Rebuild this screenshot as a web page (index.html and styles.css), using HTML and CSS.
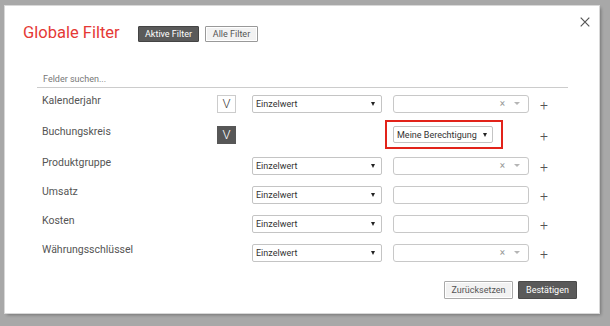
FILE: index.html
```html
<!DOCTYPE html>
<html lang="de">
<head>
    <meta charset="UTF-8">
    <meta name="viewport" content="width=device-width, initial-scale=1.0">
    <title>Globale Filter</title>
    <link rel="stylesheet" href="styles.css">
</head>
<body>
    <div class="dialog">
        <div class="dialog-header">
            <h1 class="title">Globale Filter</h1>
            <div class="tabs">
                <button class="tab tab-active">Aktive Filter</button>
                <button class="tab">Alle Filter</button>
            </div>
            <button class="close" aria-label="Schließen">
                <svg width="10" height="10" viewBox="0 0 10 10"><path d="M0.7 0.7 L9.3 9.3 M9.3 0.7 L0.7 9.3" stroke="#555" stroke-width="1.2" fill="none"/></svg>
            </button>
        </div>

        <div class="dialog-body">
            <input type="text" class="search" placeholder="Felder suchen...">

            <div class="filter-list">
                <div class="filter-row">
                    <span class="filter-label">Kalenderjahr</span>
                    <span class="toggle">V</span>
                    <div class="select"><span>Einzelwert</span><i class="caret"></i></div>
                    <div class="value"><span class="clear">×</span><i class="caret caret-light"></i></div>
                    <span class="add">+</span>
                </div>

                <div class="filter-row filter-row-tall">
                    <span class="filter-label">Buchungskreis</span>
                    <span class="toggle toggle-on">V</span>
                    <div class="highlight">
                        <div class="select select-compact"><span>Meine Berechtigung</span><i class="caret"></i></div>
                    </div>
                    <span class="add">+</span>
                </div>

                <div class="filter-row">
                    <span class="filter-label">Produktgruppe</span>
                    <span></span>
                    <div class="select"><span>Einzelwert</span><i class="caret"></i></div>
                    <div class="value"><span class="clear">×</span><i class="caret caret-light"></i></div>
                    <span class="add">+</span>
                </div>

                <div class="filter-row">
                    <span class="filter-label">Umsatz</span>
                    <span></span>
                    <div class="select"><span>Einzelwert</span><i class="caret"></i></div>
                    <div class="value"></div>
                    <span class="add">+</span>
                </div>

                <div class="filter-row">
                    <span class="filter-label">Kosten</span>
                    <span></span>
                    <div class="select"><span>Einzelwert</span><i class="caret"></i></div>
                    <div class="value"></div>
                    <span class="add">+</span>
                </div>

                <div class="filter-row">
                    <span class="filter-label">Währungsschlüssel</span>
                    <span></span>
                    <div class="select"><span>Einzelwert</span><i class="caret"></i></div>
                    <div class="value"><span class="clear">×</span><i class="caret caret-light"></i></div>
                    <span class="add">+</span>
                </div>
            </div>
        </div>

        <div class="dialog-footer">
            <button class="btn btn-light">Zurücksetzen</button>
            <button class="btn btn-dark">Bestätigen</button>
        </div>
    </div>
</body>
</html>
```

FILE: styles.css
```css
/* Page */
body {
    margin: 0;
    padding: 6px 11px 13px 5px;
    background: #a8a8a8;
    font-family: Roboto, 'Liberation Sans', sans-serif;
    color: #333;
}

button {
    font-family: inherit;
    cursor: pointer;
}

/* Dialog box */
.dialog {
    width: 594px;
    box-sizing: border-box;
    padding: 11px 9px 14px 0;
    background: #fff;
    box-shadow: 0 0 0 1px #d8d8d8, 2px 2px 3px rgba(0, 0, 0, 0.3);
}

/* Header */
.dialog-header {
    display: flex;
    align-items: flex-start;
    padding-left: 18px;
}

.title {
    margin: 6px 0 0;
    min-width: 115px;
    font-size: 16.5px;
    font-weight: 400;
    line-height: 20px;
    color: #e53935;
}

.tabs {
    display: flex;
    gap: 6px;
    margin-top: 9px;
}

.tab {
    height: 16px;
    padding: 0;
    width: 53px;
    font-size: 9px;
    color: #555;
    background: #f2f2f2;
    border: 1px solid #999;
    box-shadow: inset 0 0 0 1px #fff;
    border-radius: 1px;
}

.tab-active {
    width: 61px;
    background: #5a5a5a;
    border-color: #444;
    box-shadow: none;
    color: #fff;
}

.close {
    margin-left: auto;
    width: 10px;
    height: 10px;
    padding: 0;
    border: none;
    background: none;
    display: flex;
}

/* Body */
.dialog-body {
    padding: 0 22px 0 32px;
}

.search {
    display: block;
    width: 100%;
    height: 18px;
    box-sizing: border-box;
    margin-top: 27px;
    padding: 0 6px;
    border: none;
    border-bottom: 1px solid #ccc;
    font-family: inherit;
    font-size: 9px;
    color: #333;
    outline: none;
}

.search::placeholder {
    color: #777;
}

.filter-list {
    padding-top: 1px;
}

.filter-row {
    display: grid;
    grid-template-columns: 175px 35px 141px 147px 10px;
    align-items: center;
    height: 29px;
    padding-left: 5px;
}

.filter-row-tall {
    height: 33px;
}

.filter-label {
    font-size: 10.5px;
    color: #555;
    margin-bottom: 6px;
}

.toggle {
    width: 19px;
    height: 18px;
    box-sizing: border-box;
    border: 1px solid #ccc;
    display: flex;
    align-items: center;
    justify-content: center;
    font-size: 13px;
    font-weight: 300;
    color: #444;
}

.toggle-on {
    background: #575757;
    border-color: #575757;
    color: #fff;
}

.select {
    width: 130px;
    height: 18px;
    box-sizing: border-box;
    border: 1px solid #c4c4c4;
    border-radius: 2px;
    display: flex;
    align-items: center;
    justify-content: space-between;
    padding: 0 6px 0 3px;
    font-size: 9px;
    color: #333;
    white-space: nowrap;
}

.select-compact {
    width: 100px;
    height: 17px;
    justify-content: flex-start;
    gap: 6px;
}

.caret {
    width: 0;
    height: 0;
    flex: none;
    border-left: 2.5px solid transparent;
    border-right: 2.5px solid transparent;
    border-top: 4px solid #222;
}

.caret-light {
    border-left-width: 3.5px;
    border-right-width: 3.5px;
    border-top: 3.5px solid #b5b5b5;
}

.value {
    width: 136px;
    height: 18px;
    box-sizing: border-box;
    border: 1px solid #c8c8c8;
    border-radius: 3px;
    display: flex;
    align-items: center;
    justify-content: flex-end;
    gap: 9px;
    padding-right: 8px;
}

.clear {
    font-size: 10px;
    color: #999;
    line-height: 1;
}

.highlight {
    grid-column: 4;
    justify-self: start;
    margin-left: -8px;
    border: 2px solid #e2231a;
    padding: 4px 8px 4px 6px;
}

.add {
    grid-column: 5;
    font-size: 14px;
    font-weight: 300;
    color: #555;
    margin-top: 2px;
    line-height: 1;
}

/* Footer */
.dialog-footer {
    display: flex;
    justify-content: flex-end;
    gap: 5px;
    margin-top: 14px;
    padding-right: 13px;
}

.btn {
    height: 18px;
    padding: 0;
    font-size: 9px;
    border-radius: 1px;
}

.btn-light {
    width: 69px;
    background: #f2f2f2;
    color: #555;
    border: 1px solid #aaa;
    box-shadow: inset 0 0 0 1px #fff;
}

.btn-dark {
    width: 59px;
    background: #5a5a5a;
    color: #fff;
    border: 1px solid #4a4a4a;
}
```
